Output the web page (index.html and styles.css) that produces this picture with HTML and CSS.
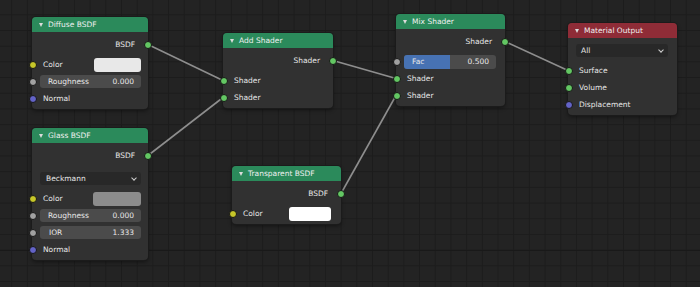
FILE: index.html
```html
<!DOCTYPE html>
<html lang="en">
<head>
    <meta charset="UTF-8">
    <meta name="viewport" content="width=device-width, initial-scale=1.0">
    <title>Shader Editor</title>
    <link rel="stylesheet" href="styles.css">
</head>
<body>
    <div class="editor">
        <!-- links between sockets -->
        <svg class="links" width="700" height="287" viewBox="0 0 700 287">
            <line x1="148" y1="44.5" x2="223" y2="80.5"/>
            <line x1="148" y1="155.5" x2="223" y2="97.5"/>
            <line x1="333" y1="60.5" x2="396" y2="78.5"/>
            <line x1="341" y1="193.5" x2="396" y2="95.5"/>
            <line x1="505" y1="41.5" x2="568" y2="70.5"/>
        </svg>

        <div class="node node-wide node-diffuse">
            <div class="node-header"><span class="arrow"></span>Diffuse BSDF</div>
            <div class="node-body">
                <div class="row out"><span>BSDF</span><i class="socket shader"></i></div>
                <div class="inputs">
                    <div class="row"><i class="socket color"></i><span>Color</span><span class="swatch light"></span></div>
                    <div class="row"><i class="socket value"></i><div class="field"><span>Roughness</span><span>0.000</span></div></div>
                    <div class="row"><i class="socket vector"></i><span>Normal</span></div>
                </div>
            </div>
        </div>

        <div class="node node-wide node-glass">
            <div class="node-header"><span class="arrow"></span>Glass BSDF</div>
            <div class="node-body">
                <div class="row out"><span>BSDF</span><i class="socket shader"></i></div>
                <div class="row select-row glass-select">
                    <div class="select"><span>Beckmann</span><span class="chev"></span></div>
                </div>
                <div class="inputs">
                    <div class="row"><i class="socket color"></i><span>Color</span><span class="swatch grey"></span></div>
                    <div class="row"><i class="socket value"></i><div class="field"><span>Roughness</span><span>0.000</span></div></div>
                    <div class="row"><i class="socket value"></i><div class="field"><span class="ior">IOR</span><span>1.333</span></div></div>
                    <div class="row"><i class="socket vector"></i><span>Normal</span></div>
                </div>
            </div>
        </div>

        <div class="node node-add">
            <div class="node-header"><span class="arrow"></span>Add Shader</div>
            <div class="node-body">
                <div class="row out"><span>Shader</span><i class="socket shader"></i></div>
                <div class="inputs">
                    <div class="row"><i class="socket shader"></i><span>Shader</span></div>
                    <div class="row"><i class="socket shader"></i><span>Shader</span></div>
                </div>
            </div>
        </div>

        <div class="node node-transparent">
            <div class="node-header"><span class="arrow"></span>Transparent BSDF</div>
            <div class="node-body">
                <div class="row out"><span>BSDF</span><i class="socket shader"></i></div>
                <div class="inputs">
                    <div class="row"><i class="socket color"></i><span>Color</span><span class="swatch white"></span></div>
                </div>
            </div>
        </div>

        <div class="node node-mix">
            <div class="node-header"><span class="arrow"></span>Mix Shader</div>
            <div class="node-body">
                <div class="row out"><span>Shader</span><i class="socket shader"></i></div>
                <div class="inputs">
                    <div class="row"><i class="socket value"></i>
                        <div class="field slider">
                            <span class="fill" style="width: 50%"></span>
                            <span>Fac</span><span>0.500</span>
                        </div>
                    </div>
                    <div class="row"><i class="socket shader"></i><span>Shader</span></div>
                    <div class="row"><i class="socket shader"></i><span>Shader</span></div>
                </div>
            </div>
        </div>

        <div class="node node-output">
            <div class="node-header"><span class="arrow"></span>Material Output</div>
            <div class="node-body">
                <div class="row select-row">
                    <div class="select"><span>All</span><span class="chev"></span></div>
                </div>
                <div class="inputs">
                    <div class="row"><i class="socket shader"></i><span>Surface</span></div>
                    <div class="row"><i class="socket shader"></i><span>Volume</span></div>
                    <div class="row"><i class="socket vector"></i><span>Displacement</span></div>
                </div>
            </div>
        </div>
    </div>
</body>
</html>
```

FILE: styles.css
```css
body {
    margin: 0;
    background-color: #232323;
    font-family: "DejaVu Sans", sans-serif;
    font-size: 7.5px;
    color: #e8e8e8;
}
.editor {
    position: relative;
    width: 700px;
    height: 287px;
    overflow: hidden;
    background-color: #232323;
    background-image:
        linear-gradient(to bottom, transparent 250px, #191919 250px, #191919 251px, transparent 251px),
        linear-gradient(to bottom, #1c1c1c 1px, transparent 1px),
        linear-gradient(to right, #1c1c1c 1px, transparent 1px);
    background-size: 100% 100%, 15.7px 15.7px, 15.7px 15.7px;
    background-position: 0 0, 0 14.3px, 11.2px 0;
}
.links {
    position: absolute;
    left: 0;
    top: 0;
}
.links line {
    stroke: #8e8e8e;
    stroke-width: 1.6;
}

/* nodes sit on a free canvas */
.node {
    position: absolute;
    width: 109px;
    background-color: #313131;
    border-radius: 4px;
    box-shadow: 0 0 0 1px #1b1b1b, 0 2px 4px rgba(0, 0, 0, 0.45);
}
.node-wide { width: 116px; }
.node-diffuse { left: 32px; top: 17px; }
.node-glass { left: 32px; top: 128px; }
.node-add { left: 223px; top: 33px; width: 110px; }
.node-transparent { left: 232px; top: 166px; }
.node-mix { left: 396px; top: 14px; }
.node-output { left: 568px; top: 23px; }

.node-header {
    height: 15px;
    display: flex;
    align-items: center;
    padding-left: 7px;
    background-color: #2b8a5b;
    border-radius: 4px 4px 0 0;
    color: #f0f0f0;
}
.node-output .node-header {
    background-color: #8f2c37;
}
.arrow {
    width: 0;
    height: 0;
    margin-right: 5px;
    border-left: 2.5px solid transparent;
    border-right: 2.5px solid transparent;
    border-top: 4px solid #dcdcdc;
}
.node-body {
    padding: 4px 0 2px;
}
.inputs {
    margin-top: 3px;
}
.row {
    position: relative;
    height: 17px;
    display: flex;
    align-items: center;
    padding-left: 11px;
}
.row.out {
    justify-content: flex-end;
    padding-left: 0;
    padding-right: 13px;
}

.socket {
    position: absolute;
    left: -3.5px;
    top: 5px;
    width: 6px;
    height: 6px;
    border-radius: 50%;
    border: 0.5px solid #161616;
}
.row.out .socket {
    left: auto;
    right: -3.5px;
}
.socket.shader { background-color: #63c763; }
.socket.color { background-color: #c7c729; }
.socket.value { background-color: #a1a1a1; }
.socket.vector { background-color: #6363c7; }

.swatch {
    margin-left: auto;
    margin-right: 7px;
    width: 47px;
    height: 14px;
    border-radius: 3px;
}
.swatch.light { background-color: #e8e8e8; }
.swatch.grey { width: 48px; background-color: #8c8c8c; }
.swatch.white { width: 42px; margin-right: 10px; background-color: #ffffff; }

.field {
    position: relative;
    flex: 1;
    height: 13px;
    margin: 0 7px 0 -3px;
    padding: 0 7px 0 8px;
    display: flex;
    align-items: center;
    justify-content: space-between;
    background-color: #4b4b4b;
    border-radius: 3px;
    overflow: hidden;
}
.field span {
    position: relative;
}
.field .ior {
    padding-left: 1px;
}
.slider {
    margin-right: 9px;
    margin-left: -3px;
    height: 14px;
}
.slider .fill {
    position: absolute;
    left: 0;
    top: 0;
    bottom: 0;
    background-color: #4772b3;
}

.select-row {
    padding-left: 8px;
    padding-right: 7px;
}
.node-output .select-row {
    padding-right: 9px;
}
.glass-select {
    margin-top: 6px;
}
.select {
    flex: 1;
    height: 13px;
    display: flex;
    align-items: center;
    justify-content: space-between;
    padding: 0 5px 0 6px;
    background-color: #282828;
    border-radius: 3px;
}
.node-output .select {
    padding-left: 5px;
}
.chev {
    width: 3px;
    height: 3px;
    margin-bottom: 2px;
    border-right: 1px solid #d0d0d0;
    border-bottom: 1px solid #d0d0d0;
    transform: rotate(45deg);
}
```
